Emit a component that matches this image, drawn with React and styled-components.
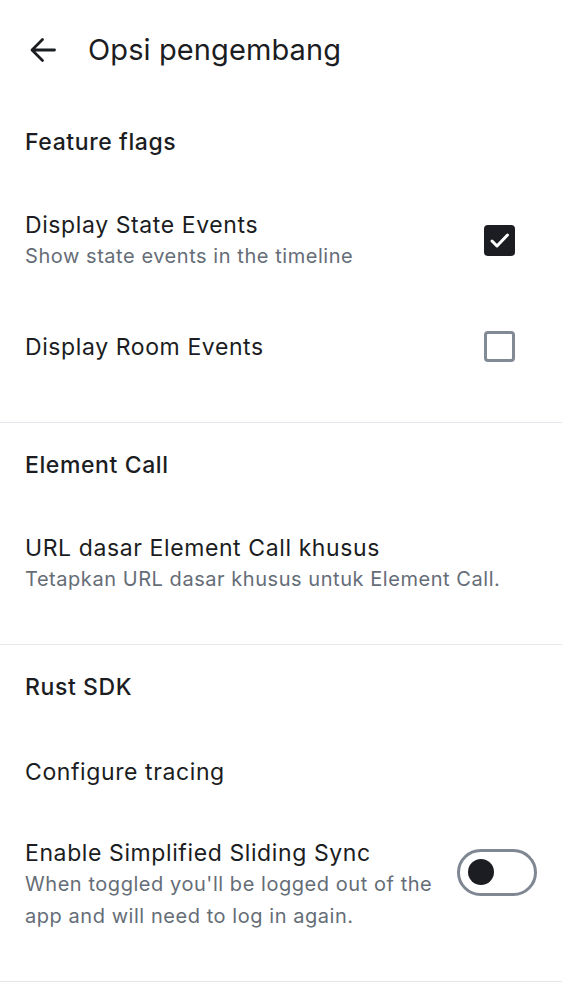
import React from "react";
import styled, { createGlobalStyle } from "styled-components";

const GlobalStyle = createGlobalStyle`
  html, body { margin: 0; padding: 0; background: #ffffff; }
  body { font-family: Inter, "Noto Sans", Roboto, sans-serif; color: #1b1d22; }
  * { box-sizing: border-box; }
`;

const Page = styled.div`
  width: 562px;
  background: #ffffff;
  display: flex;
  flex-direction: column;
`;

const TopBar = styled.header`
  height: 100px;
  display: flex;
  align-items: center;
  padding-left: 26px;
  gap: 28px;
`;

const BackButton = styled.button`
  width: 34px;
  height: 34px;
  padding: 0;
  border: none;
  background: none;
  display: flex;
  align-items: center;
  justify-content: center;
  color: #1b1d22;
`;

const Title = styled.h1`
  margin: 0;
  font-size: 29px;
  line-height: 36px;
  font-weight: 400;
  color: #1b1d22;
  letter-spacing: 0.1px;
`;

const Section = styled.section`
  display: flex;
  flex-direction: column;
  padding-bottom: 25px;
  border-bottom: 1px solid #e4e7ec;
`;

const SectionTitle = styled.h2`
  margin: 0;
  padding: 26px 25px 27px;
  font-size: 23px;
  line-height: 32px;
  font-weight: 500;
  letter-spacing: 0.6px;
  color: #1b1d22;
`;

const Row = styled.div`
  display: flex;
  align-items: center;
  gap: 24px;
  padding: 24px 25px;
`;

const TextCol = styled.div`
  flex: 1;
  min-height: 35px;
  display: flex;
  flex-direction: column;
  justify-content: center;
`;

const RowTitle = styled.div`
  font-size: 23px;
  line-height: 32px;
  font-weight: 400;
  letter-spacing: 0.6px;
  color: #1b1d22;
`;

const RowSubtitle = styled.div`
  font-size: 20px;
  line-height: 31.5px;
  font-weight: 400;
  letter-spacing: 0.55px;
  color: #656d77;
`;

const CheckSlot = styled.div`
  width: 75px;
  height: 52px;
  flex: none;
  display: flex;
  align-items: center;
  justify-content: center;
`;

const CheckBox = styled.span`
  width: 31px;
  height: 31px;
  border-radius: 4px;
  display: flex;
  align-items: center;
  justify-content: center;
  background: ${(p) => (p.$checked ? "#1b1d22" : "transparent")};
  border: ${(p) => (p.$checked ? "none" : "3px solid #818a95")};
`;

const ToggleSlot = styled.div`
  align-self: flex-start;
  height: 70px;
  flex: none;
  display: flex;
  align-items: center;
`;

const Toggle = styled.span`
  width: 80px;
  height: 47px;
  border-radius: 24px;
  border: 3px solid #7f8792;
  display: flex;
  align-items: center;
  padding-left: 8px;
  background: #ffffff;
`;

const Knob = styled.span`
  width: 26px;
  height: 26px;
  border-radius: 50%;
  background: #1b1d22;
`;

function BackIcon() {
  return (
    <svg width="34" height="34" viewBox="0 0 34 34" fill="none">
      <path
        d="M28.5 17H6.5M16.5 6.5L6 17l10.5 10.5"
        stroke="#1b1d22"
        strokeWidth="2.8"
        strokeLinecap="round"
        strokeLinejoin="round"
      />
    </svg>
  );
}

function CheckMark() {
  return (
    <svg width="31" height="31" viewBox="0 0 31 31" fill="none">
      <path
        d="M8 16l5 5 10.5-11"
        stroke="#ffffff"
        strokeWidth="3"
        strokeLinecap="round"
        strokeLinejoin="round"
      />
    </svg>
  );
}

function Check({ checked }) {
  return (
    <CheckSlot>
      <CheckBox $checked={checked}>{checked && <CheckMark />}</CheckBox>
    </CheckSlot>
  );
}

function Item({ title, subtitle, trailing }) {
  return (
    <Row>
      <TextCol>
        <RowTitle>{title}</RowTitle>
        {subtitle && <RowSubtitle>{subtitle}</RowSubtitle>}
      </TextCol>
      {trailing}
    </Row>
  );
}

export default function App() {
  return (
    <>
      <GlobalStyle />
      <Page>
        <TopBar>
          <BackButton aria-label="Back">
            <BackIcon />
          </BackButton>
          <Title>Opsi pengembang</Title>
        </TopBar>

        <Section>
          <SectionTitle>Feature flags</SectionTitle>
          <Item
            title="Display State Events"
            subtitle="Show state events in the timeline"
            trailing={<Check checked />}
          />
          <Item title="Display Room Events" trailing={<Check checked={false} />} />
        </Section>

        <Section>
          <SectionTitle>Element Call</SectionTitle>
          <Item
            title="URL dasar Element Call khusus"
            subtitle="Tetapkan URL dasar khusus untuk Element Call."
          />
        </Section>

        <Section>
          <SectionTitle>Rust SDK</SectionTitle>
          <Item title="Configure tracing" />
          <Item
            title="Enable Simplified Sliding Sync"
            subtitle="When toggled you'll be logged out of the app and will need to log in again."
            trailing={
              <ToggleSlot>
                <Toggle>
                  <Knob />
                </Toggle>
              </ToggleSlot>
            }
          />
        </Section>
      </Page>
    </>
  );
}
